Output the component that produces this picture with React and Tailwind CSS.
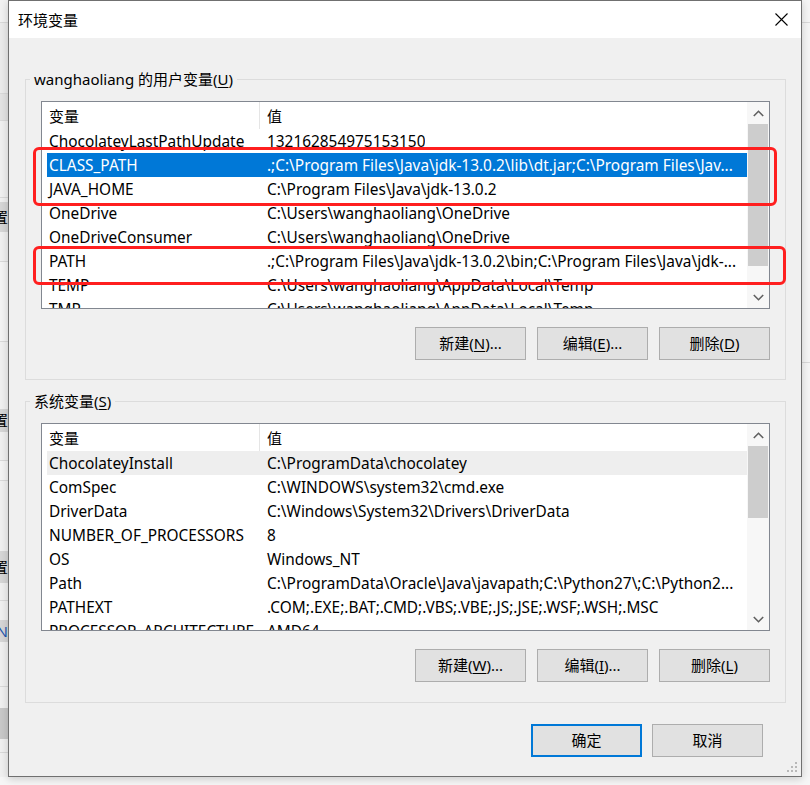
import React from "react";

const userVars = [
  ["ChocolateyLastPathUpdate", "132162854975153150"],
  ["CLASS_PATH", ".;C:\\Program Files\\Java\\jdk-13.0.2\\lib\\dt.jar;C:\\Program Files\\Jav..."],
  ["JAVA_HOME", "C:\\Program Files\\Java\\jdk-13.0.2"],
  ["OneDrive", "C:\\Users\\wanghaoliang\\OneDrive"],
  ["OneDriveConsumer", "C:\\Users\\wanghaoliang\\OneDrive"],
  ["PATH", ".;C:\\Program Files\\Java\\jdk-13.0.2\\bin;C:\\Program Files\\Java\\jdk-..."],
  ["TEMP", "C:\\Users\\wanghaoliang\\AppData\\Local\\Temp"],
  ["TMP", "C:\\Users\\wanghaoliang\\AppData\\Local\\Temp"],
];

const sysVars = [
  ["ChocolateyInstall", "C:\\ProgramData\\chocolatey"],
  ["ComSpec", "C:\\WINDOWS\\system32\\cmd.exe"],
  ["DriverData", "C:\\Windows\\System32\\Drivers\\DriverData"],
  ["NUMBER_OF_PROCESSORS", "8"],
  ["OS", "Windows_NT"],
  ["Path", "C:\\ProgramData\\Oracle\\Java\\javapath;C:\\Python27\\;C:\\Python2..."],
  ["PATHEXT", ".COM;.EXE;.BAT;.CMD;.VBS;.VBE;.JS;.JSE;.WSF;.WSH;.MSC"],
  ["PROCESSOR_ARCHITECTURE", "AMD64"],
];

// background window peeking out on the left: [height, bg, text]
const leftStrip = [
  [22, "bg-[#f2f2f2]"], [1, "bg-[#d9d9d9]"], [70, "bg-[#ebebeb]"], [1, "bg-[#d9d9d9]"],
  [26, "bg-[#e3e3e3]"], [1, "bg-[#d9d9d9]"], [76, "bg-[#f0f0f0]"], [1, "bg-[#d9d9d9]"],
  [4, "bg-[#f0f0f0]"], [30, "bg-[#d6d6d6]", "置"], [29, "bg-[#f0f0f0]"], [1, "bg-[#d9d9d9]"],
  [79, "bg-[#f4f4f4]"], [1, "bg-[#d9d9d9]"], [67, "bg-[#f0f0f0]"], [23, "bg-[#d6d6d6]", "置"],
  [28, "bg-[#f0f0f0]"], [1, "bg-[#d9d9d9]"], [19, "bg-[#f4f4f4]"], [1, "bg-[#d9d9d9]"],
  [70, "bg-[#f0f0f0]"], [32, "bg-[#d6d6d6]", "置"], [17, "bg-[#f0f0f0]"], [1, "bg-[#d9d9d9]"],
  [19, "bg-[#f0f0f0]"], [22, "bg-[#d6d6d6]", "(N"], [44, "bg-[#f0f0f0]"], [1, "bg-[#d9d9d9]"],
  [21, "bg-[#f0f0f0]"], [31, "bg-[#c8c8c8]"], [13, "bg-[#f0f0f0]"], [1, "bg-[#d9d9d9]"],
  [19, "bg-[#f0f0f0]"],
];

function Chevron({ down }) {
  return (
    <svg width="11" height="7" viewBox="0 0 11 7" className={down ? "rotate-180" : ""}>
      <polyline points="0.8,6 5.5,1.3 10.2,6" fill="none" stroke="#606060" strokeWidth="1.6" />
    </svg>
  );
}

function ListView({ rows, selected, hovered, thumbHeight }) {
  return (
    <div className="flex h-[208px] w-[729px] border border-[#828790] bg-white text-[15.4px]">
      <div className="flex min-w-0 flex-1 flex-col overflow-hidden">
        <div className="flex h-[27px] shrink-0 items-center text-[15px]">
          <div className="flex h-full w-[218px] items-center border-r border-[#e5e5e5] pl-[7px] pt-[2px]">变量</div>
          <div className="pl-[7px] pt-[2px]">值</div>
        </div>
        {rows.map(([name, value], i) => (
          <div
            key={name}
            className={`ml-[5px] flex h-[24px] shrink-0 items-center pt-[2px] ${
              i === selected ? "bg-[#0078d7] text-white" : i === hovered ? "bg-[#eeeeee]" : ""
            }`}
          >
            <div className="w-[212px] shrink-0 whitespace-nowrap pl-[2px]">{name}</div>
            <div className="min-w-0 overflow-hidden whitespace-nowrap pl-[8px]">{value}</div>
          </div>
        ))}
      </div>
      <div className="flex w-[22px] shrink-0 flex-col bg-[#f7f7f7]">
        <div className="flex h-[22px] shrink-0 items-center justify-center">
          <Chevron />
        </div>
        <div className="flex-1">
          <div className="mx-[1px] bg-[#cdcdcd]" style={{ height: thumbHeight }} />
        </div>
        <div className="flex h-[22px] shrink-0 items-center justify-center">
          <Chevron down />
        </div>
      </div>
    </div>
  );
}

function Btn({ children, primary }) {
  return (
    <button
      className={`flex h-[33px] w-[111px] items-center justify-center bg-[#e1e1e1] text-[15px] ${
        primary ? "border-2 border-[#0078d7]" : "border border-[#adadad]"
      }`}
    >
      {children}
    </button>
  );
}

const U = ({ children }) => <span className="underline underline-offset-2">{children}</span>;

function Group({ label, children }) {
  return (
    <fieldset className="ml-[16px] w-[761px] border border-[#dcdcdc]">
      <legend className="ml-[4px] px-[4px] leading-[20px]">{label}</legend>
      <div className="px-[15px]">{children}</div>
    </fieldset>
  );
}

export default function App() {
  return (
    <div className="relative flex h-[785px] w-[810px] overflow-hidden bg-[#f6f6f6] font-['Noto_Sans','Noto_Sans_CJK_SC',sans-serif] text-[15px] text-black">
      {/* background window on the left */}
      <div className="flex h-[777px] w-[8px] shrink-0 flex-col">
        {leftStrip.map(([h, bg, t], i) => (
          <div
            key={i}
            className={`flex shrink-0 items-center justify-end overflow-hidden whitespace-nowrap ${bg} ${
              t === "(N" ? "text-[#1a56b0]" : ""
            }`}
            style={{ height: h }}
          >
            {t}
          </div>
        ))}
        <div className="flex-1 bg-[#f0f0f0]" />
      </div>

      {/* dialog */}
      <div className="relative flex h-[777px] w-[794px] shrink-0 flex-col border border-[#707070] bg-[#f0f0f0] shadow-[0_2px_8px_rgba(0,0,0,0.18)]">
        <div className="flex h-[37px] shrink-0 items-center justify-between bg-white pl-[9px] pr-[13px]">
          <span className="pt-[1px]">环境变量</span>
          <svg width="13" height="13" viewBox="0 0 13 13">
            <path d="M0.5 0.5 L12.5 12.5 M12.5 0.5 L0.5 12.5" stroke="#000" strokeWidth="1.1" />
          </svg>
        </div>

        <div className="mt-[31px]">
          <Group label={<>wanghaoliang 的用户变量(<U>U</U>)</>}>
            <div className="pt-[12px]">
              <ListView rows={userVars} selected={1} thumbHeight={142} />
            </div>
            <div className="mt-[18px] flex justify-end gap-[11px] pb-[19px]">
              <Btn>新建(<U>N</U>)...</Btn>
              <Btn>编辑(<U>E</U>)...</Btn>
              <Btn>删除(<U>D</U>)</Btn>
            </div>
          </Group>
        </div>

        <div className="mt-[11px]">
          <Group label={<>系统变量(<U>S</U>)</>}>
            <div className="pt-[12px]">
              <ListView rows={sysVars} hovered={0} thumbHeight={72} />
            </div>
            <div className="mt-[18px] flex justify-end gap-[11px] pb-[20px]">
              <Btn>新建(<U>W</U>)...</Btn>
              <Btn>编辑(<U>I</U>)...</Btn>
              <Btn>删除(<U>L</U>)</Btn>
            </div>
          </Group>
        </div>

        <div className="mt-[21px] flex justify-end gap-[10px] pr-[38px]">
          <Btn primary>确定</Btn>
          <Btn>取消</Btn>
        </div>

        {/* resize grip */}
        <svg width="12" height="12" viewBox="0 0 12 12" className="absolute bottom-[2px] right-[2px]">
          <g fill="#b8b8b8">
            <rect x="8" y="0" width="2" height="2" />
            <rect x="4" y="4" width="2" height="2" />
            <rect x="8" y="4" width="2" height="2" />
            <rect x="0" y="8" width="2" height="2" />
            <rect x="4" y="8" width="2" height="2" />
            <rect x="8" y="8" width="2" height="2" />
          </g>
        </svg>
      </div>

      {/* background on the right */}
      <div className="flex h-[777px] w-[8px] shrink-0 flex-col bg-[#f5f5f5]">
        <div className="h-[22px] shrink-0" />
        <div className="h-[1px] shrink-0 bg-[#d9d9d9]" />
        <div className="h-[339px] shrink-0" />
        <div className="h-[1px] shrink-0 bg-[#d9d9d9]" />
      </div>

      {/* red annotation boxes */}
      <div className="absolute left-[33px] top-[147px] h-[59px] w-[744px] rounded-[6px] border-[3px] border-[#ff1f1f]" />
      <div className="absolute left-[33px] top-[246px] h-[39px] w-[753px] rounded-[6px] border-[3px] border-[#ff1f1f]" />
    </div>
  );
}
